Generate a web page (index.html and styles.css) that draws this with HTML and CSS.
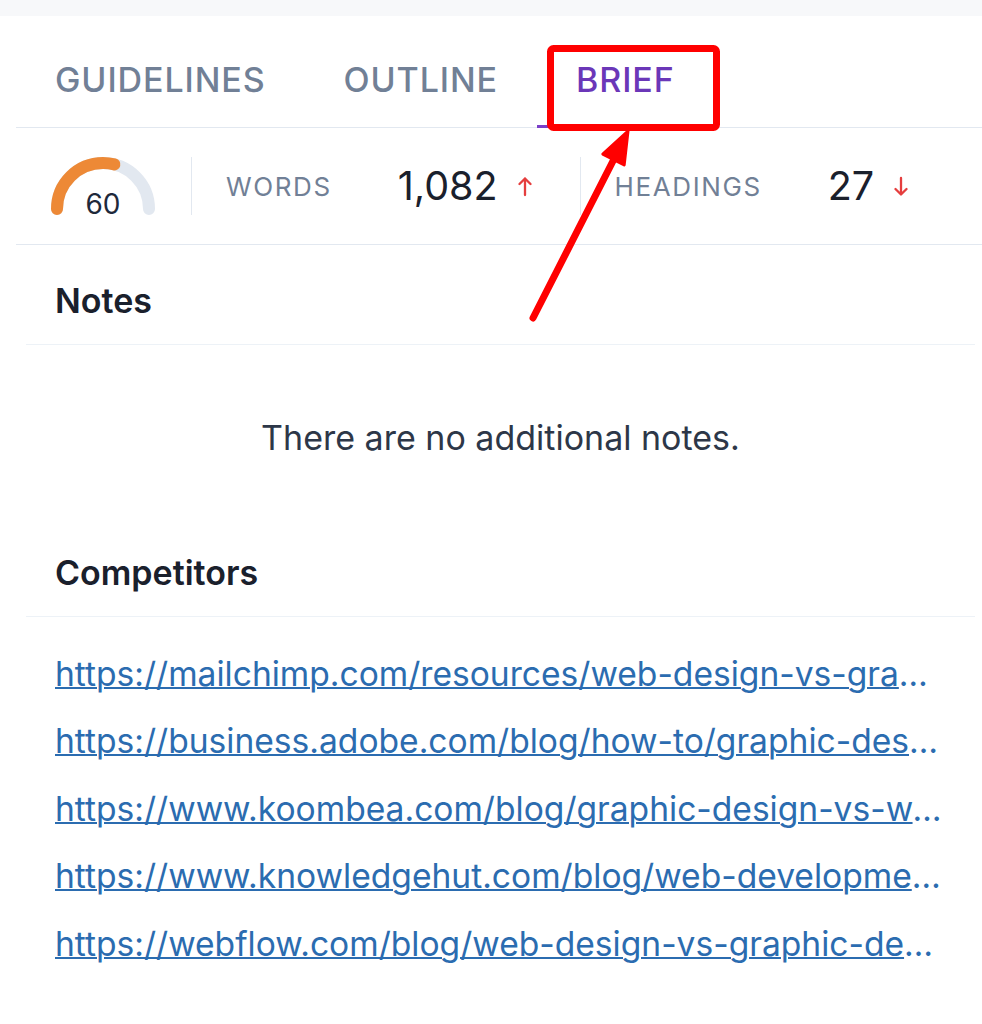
FILE: index.html
```html
<!DOCTYPE html>
<html lang="en">
<head>
    <meta charset="UTF-8">
    <meta name="viewport" content="width=device-width, initial-scale=1.0">
    <title>Brief</title>
    <link rel="stylesheet" href="styles.css">
</head>
<body>

<div class="page">
    <div class="top-strip"></div>

    <div class="panel">
        <nav class="tabs">
            <div class="tab">GUIDELINES</div>
            <div class="tab">OUTLINE</div>
            <div class="tab active">BRIEF</div>
        </nav>

        <div class="stats">
            <svg class="gauge" width="110" height="64" viewBox="0 0 110 64">
                <path d="M9 54 A46 46 0 0 1 101 54" fill="none" stroke="#e2e8f0" stroke-width="12" stroke-linecap="round"/>
                <path d="M9 54 A46 46 0 0 1 101 54" fill="none" stroke="#ed8936" stroke-width="12" stroke-linecap="round"
                      pathLength="100" stroke-dasharray="58 200"/>
                <text x="55" y="59" text-anchor="middle" class="gauge-num">60</text>
            </svg>
            <div class="divider first"></div>
            <div class="stat">
                <span class="stat-label">WORDS</span>
                <span class="stat-value">1,082</span>
                <svg class="trend" width="14" height="21" viewBox="0 0 14 21">
                    <path d="M7 19 V2.5 M1.5 8 L7 2.5 L12.5 8" fill="none" stroke="#e53e3e" stroke-width="2.3" stroke-linecap="round" stroke-linejoin="round"/>
                </svg>
            </div>
            <div class="divider"></div>
            <div class="stat">
                <span class="stat-label">HEADINGS</span>
                <span class="stat-value">27</span>
                <svg class="trend" width="14" height="21" viewBox="0 0 14 21">
                    <path d="M7 2 V18.5 M1.5 13 L7 18.5 L12.5 13" fill="none" stroke="#e53e3e" stroke-width="2.3" stroke-linecap="round" stroke-linejoin="round"/>
                </svg>
            </div>
        </div>

        <section class="block">
            <h2 class="block-title">Notes</h2>
        </section>
        <p class="empty">There are no additional notes.</p>

        <section class="block">
            <h2 class="block-title">Competitors</h2>
        </section>
        <div class="links">
            <div class="link-row"><a href="#">https://mailchimp.com/resources/web-design-vs-graphic-design/</a></div>
            <div class="link-row"><a href="#">https://business.adobe.com/blog/how-to/graphic-design-vs-web-design</a></div>
            <div class="link-row"><a href="#">https://www.koombea.com/blog/graphic-design-vs-web-design/</a></div>
            <div class="link-row"><a href="#">https://www.knowledgehut.com/blog/web-development/graphic-design-vs-web-design</a></div>
            <div class="link-row"><a href="#">https://webflow.com/blog/web-design-vs-graphic-design</a></div>
        </div>
    </div>

    <!-- annotation drawn over the screenshot -->
    <svg class="markup" width="982" height="1024" viewBox="0 0 982 1024">
        <rect x="550.5" y="48.5" width="166" height="79" rx="3" fill="none" stroke="#ff0000" stroke-width="7"/>
        <line x1="533" y1="318" x2="614" y2="159" stroke="#ff0000" stroke-width="7" stroke-linecap="round"/>
        <polygon points="628,131 602.8,154.1 624.2,164.9" fill="#ff0000" stroke="#ff0000" stroke-width="3" stroke-linejoin="round"/>
    </svg>
</div>

</body>
</html>
```

FILE: styles.css
```css
html, body {
    margin: 0;
    padding: 0;
    overflow-x: hidden;
    background-color: white;
}

body {
    font-family: Inter, "Noto Sans", "Liberation Sans", sans-serif;
    color: #1a202c;
}

.page {
    position: relative;
    width: 982px;
    min-height: 1024px;
}

.top-strip {
    height: 16px;
    background-color: #f7f8fa;
}

.panel {
    margin-left: 16px;
    width: 969px;
}

/* tabs */
.tabs {
    display: flex;
    border-bottom: 1px solid #e2e8f0;
}

.tab {
    padding: 44px 39px 25px;
    font-size: 34px;
    line-height: 40px;
    font-weight: 500;
    letter-spacing: 0.9px;
    color: #718096;
    margin-bottom: -1px;
    border-bottom: 3px solid transparent;
}

.tab.active {
    color: #6b37b8;
    border-bottom-color: #7b3fc8;
}

/* stats row */
.stats {
    display: flex;
    align-items: center;
    height: 116px;
    padding-left: 32px;
    border-bottom: 1px solid #e2e8f0;
}

.gauge {
    display: block;
    margin-top: 2px;
}

.gauge-num {
    font-family: Inter, "Noto Sans", sans-serif;
    font-size: 28px;
    fill: #1e293b;
}

.divider {
    width: 1px;
    height: 58px;
    background-color: #e2e8f0;
}

.divider.first {
    margin-left: 33px;
}

.stat {
    display: flex;
    align-items: center;
    padding: 0 48px 0 34px;
}

.stat-label {
    font-size: 26px;
    letter-spacing: 1.6px;
    color: #718096;
    margin-right: 66px;
}

.stat-value {
    font-size: 39.5px;
    color: #1a202c;
    margin-right: 20px;
}

.trend {
    display: block;
}

/* sections */
.block {
    margin: 0 10px;
    border-bottom: 1px solid #edf2f7;
}

.block-title {
    margin: 0;
    padding: 34px 29px 21px;
    font-size: 34px;
    line-height: 44px;
    font-weight: 600;
    color: #1a202c;
}

.empty {
    margin: 0;
    padding: 72px 0 58px;
    text-align: center;
    font-size: 34px;
    line-height: 42px;
    color: #2d3748;
}

.links {
    padding: 23px 39px 0;
}

.link-row {
    padding: 12.75px 0;
    line-height: 42px;
    font-size: 33.6px;
    color: #2b6cb0;
    white-space: nowrap;
    overflow: hidden;
    text-overflow: ellipsis;
}

.link-row a {
    color: #2b6cb0;
    text-decoration: underline;
    text-decoration-thickness: 2px;
}

.markup {
    position: absolute;
    left: 0;
    top: 0;
    pointer-events: none;
}
```
